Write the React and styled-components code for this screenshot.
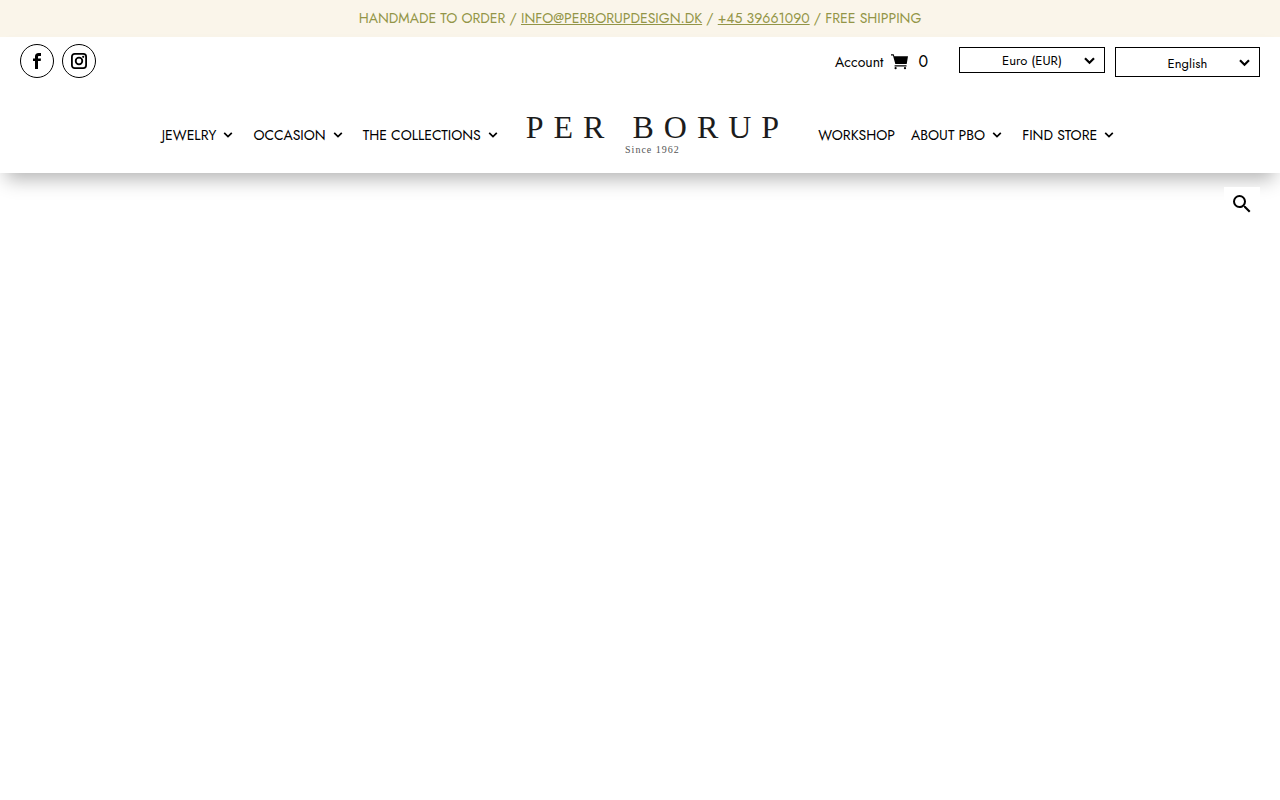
import React from "react";
import styled, { createGlobalStyle } from "styled-components";
import { MdSearch } from "react-icons/md";

const colors = {
  text: "#000000",
  cream: "#faf5ea",
  olive: "#939547",
  white: "#ffffff",
};

const GlobalStyle = createGlobalStyle`
  * {
    box-sizing: border-box;
  }

  body {
    margin: 0;
    background: ${colors.white};
    color: ${colors.text};
    font-family: Jost, Lato, "Open Sans", sans-serif;
    font-size: 14px;
    line-height: 20px;
  }

  a {
    color: inherit;
    text-decoration: none;
  }
`;

const Announcement = styled.p`
  margin: 0;
  padding: 8px 20px 9px;
  background: ${colors.cream};
  color: ${colors.olive};
  text-align: center;
  text-transform: uppercase;

  a {
    text-decoration: underline;
  }
`;

const HeaderWrapper = styled.header`
  background: ${colors.white};
  padding: 7px 20px 15px;
  box-shadow: 0 12px 18px -6px rgba(0, 0, 0, 0.3);
`;

const TopRow = styled.div`
  display: flex;
  justify-content: space-between;
  align-items: flex-start;
`;

const SocialList = styled.div`
  display: flex;
  gap: 8px;
`;

const SocialLink = styled.a`
  display: flex;
  align-items: center;
  justify-content: center;
  width: 34px;
  height: 34px;
  border: 1px solid ${colors.text};
  border-radius: 50%;
`;

const Tools = styled.div`
  display: flex;
  align-items: flex-start;
  gap: 10px;
  padding-top: 3px;
`;

const AccountLinks = styled.div`
  display: flex;
  align-items: center;
  gap: 8px;
  padding: 5px 21px 0 0;
`;

const CartLink = styled.a`
  display: flex;
  align-items: center;
  gap: 10px;
  font-size: 16px;
`;

const SelectWrapper = styled.div`
  position: relative;

  svg {
    position: absolute;
    top: 50%;
    right: 10px;
    margin-top: -3px;
    pointer-events: none;
  }
`;

const Select = styled.select`
  appearance: none;
  display: block;
  width: ${(props) => (props.$tall ? "145px" : "146px")};
  height: ${(props) => (props.$tall ? "30px" : "26px")};
  padding: ${(props) => (props.$tall ? "2px 20px 0" : "0 20px")};
  border: 1px solid ${colors.text};
  border-radius: 0;
  background: ${colors.white};
  color: ${colors.text};
  font-family: inherit;
  font-size: 13px;
  text-align: center;
  text-align-last: center;
`;

const NavRow = styled.nav`
  display: flex;
  align-items: center;
  justify-content: center;
  padding-top: 34px;
`;

const Menu = styled.ul`
  display: flex;
  gap: 16px;
  margin: 0;
  padding: 0;
  list-style: none;
`;

const MenuLink = styled.a`
  display: flex;
  align-items: center;
  gap: 7px;
  padding-right: ${(props) => (props.$hasMenu ? "4px" : "0")};
  text-transform: uppercase;
  white-space: nowrap;
`;

const Logo = styled.a`
  display: flex;
  flex-direction: column;
  align-items: center;
  margin: 0 29px 0 24px;
  font-family: "Liberation Serif", serif;
`;

const LogoName = styled.span`
  color: #1c1c1c;
  font-size: 32px;
  line-height: 30px;
  letter-spacing: 10px;
  white-space: nowrap;
`;

const LogoTagline = styled.span`
  color: #555555;
  font-size: 10px;
  line-height: 16px;
  letter-spacing: 1px;
  padding-right: 10px;
`;

const Content = styled.main`
  display: flex;
  justify-content: flex-end;
  padding: 14px 20px;
`;

const SearchButton = styled.button`
  display: flex;
  align-items: center;
  justify-content: center;
  width: 36px;
  height: 34px;
  padding: 0;
  border: 0;
  background: ${colors.white};
  color: ${colors.text};
`;

const Chevron = () => (
  <svg width="10" height="6" viewBox="0 0 10 6" aria-hidden="true">
    <path d="M1.2 .8 5 4.6l3.8-3.8" fill="none" stroke="currentColor" strokeWidth="1.7" />
  </svg>
);

const SelectArrow = () => (
  <svg width="11" height="8" viewBox="0 0 11 8" aria-hidden="true">
    <path d="M1 1.2 5.5 5.7 10 1.2" fill="none" stroke="currentColor" strokeWidth="2.2" />
  </svg>
);

const FacebookIcon = () => (
  <svg width="16" height="16" viewBox="0 0 16 16" aria-hidden="true">
    <path
      d="M12 0v3h-2C9.3 3 9 3.3 9 4v1.5h3L11.7 8H9v8H6V8H4V5.5h2V3.6C6 1.3 7.3 0 9.6 0z"
      fill="currentColor"
    />
  </svg>
);

const InstagramIcon = () => (
  <svg width="16" height="16" viewBox="0 0 16 16" aria-hidden="true">
    <g fill="none" stroke="currentColor" strokeWidth="1.8">
      <rect x="0.9" y="0.9" width="14.2" height="14.2" rx="2.8" />
      <circle cx="8" cy="8" r="3.3" />
    </g>
    <circle cx="12.2" cy="3.8" r="1.1" fill="currentColor" />
  </svg>
);

const CartIcon = () => (
  <svg width="17" height="16" viewBox="0 0 17 16" aria-hidden="true">
    <path
      d="M0 .3h2.7l.6 1.9H17L15.7 10H4.3L2 1.500H0zM3.600 11.200H15.500v1.200H3.600z"
      fill="currentColor"
    />
    <circle cx="4.600" cy="14.200" r="1.100" fill="currentColor" />
    <circle cx="14" cy="14.200" r="1.100" fill="currentColor" />
  </svg>
);

const leftMenu = [
  { label: "Jewelry", hasMenu: true },
  { label: "Occasion", hasMenu: true },
  { label: "The Collections", hasMenu: true },
];

const rightMenu = [
  { label: "Workshop", hasMenu: false },
  { label: "About PBO", hasMenu: true },
  { label: "Find Store", hasMenu: true },
];

const MenuList = ({ items }) => (
  <Menu>
    {items.map((item) => (
      <li key={item.label}>
        <MenuLink href="#" $hasMenu={item.hasMenu}>
          {item.label}
          {item.hasMenu && <Chevron />}
        </MenuLink>
      </li>
    ))}
  </Menu>
);

const App = () => {
  return (
    <>
      <GlobalStyle />
      <Announcement>
        Handmade to order / <a href="mailto:info@perborupdesign.dk">info@perborupdesign.dk</a> /{" "}
        <a href="tel:+4539661090">+45 39661090</a> / Free shipping
      </Announcement>
      <HeaderWrapper>
        <TopRow>
          <SocialList>
            <SocialLink href="#" aria-label="Facebook">
              <FacebookIcon />
            </SocialLink>
            <SocialLink href="#" aria-label="Instagram">
              <InstagramIcon />
            </SocialLink>
          </SocialList>
          <Tools>
            <AccountLinks>
              <a href="#">Account</a>
              <CartLink href="#" aria-label="Cart">
                <CartIcon />
                <span>0</span>
              </CartLink>
            </AccountLinks>
            <SelectWrapper>
              <Select aria-label="Currency" defaultValue="EUR">
                <option value="EUR">Euro (EUR)</option>
              </Select>
              <SelectArrow />
            </SelectWrapper>
            <SelectWrapper>
              <Select aria-label="Language" defaultValue="en" $tall>
                <option value="en">English</option>
              </Select>
              <SelectArrow />
            </SelectWrapper>
          </Tools>
        </TopRow>
        <NavRow>
          <MenuList items={leftMenu} />
          <Logo href="#">
            <LogoName>PER BORUP</LogoName>
            <LogoTagline>Since 1962</LogoTagline>
          </Logo>
          <MenuList items={rightMenu} />
        </NavRow>
      </HeaderWrapper>
      <Content>
        <SearchButton type="button" aria-label="Search">
          <MdSearch size={24} />
        </SearchButton>
      </Content>
    </>
  );
};

export default App;
